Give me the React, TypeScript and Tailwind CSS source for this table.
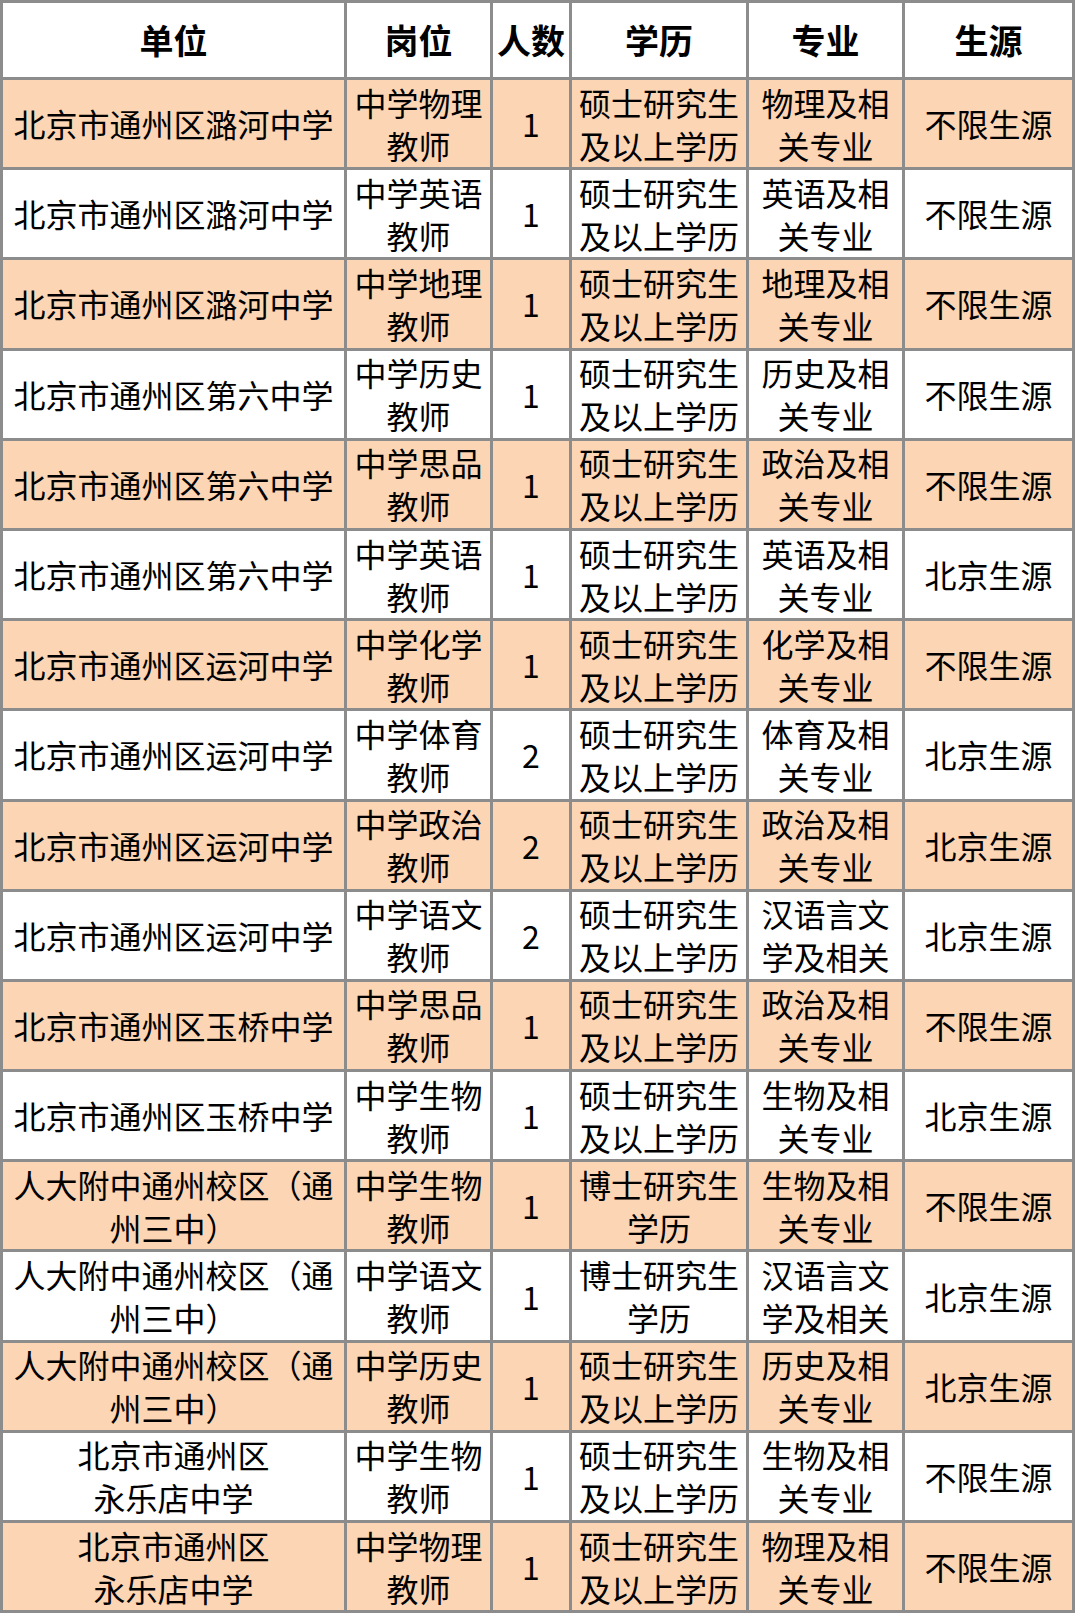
const HEADERS = ["单位", "岗位", "人数", "学历", "专业", "生源"];

type Row = string[][];

const LUHE = [["北京市通州区潞河中学"]];
const LIU = [["北京市通州区第六中学"]];
const YUNHE = [["北京市通州区运河中学"]];
const YUQIAO = [["北京市通州区玉桥中学"]];
const RENDA = [["人大附中通州校区（通", "州三中）"]];
const YONGLE = [["北京市通州区", "永乐店中学"]];
const SHUOSHI = ["硕士研究生", "及以上学历"];
const BOSHI = ["博士研究生", "学历"];

const ROWS: Row[] = [
  [...LUHE, ["中学物理", "教师"], ["1"], SHUOSHI, ["物理及相", "关专业"], ["不限生源"]],
  [...LUHE, ["中学英语", "教师"], ["1"], SHUOSHI, ["英语及相", "关专业"], ["不限生源"]],
  [...LUHE, ["中学地理", "教师"], ["1"], SHUOSHI, ["地理及相", "关专业"], ["不限生源"]],
  [...LIU, ["中学历史", "教师"], ["1"], SHUOSHI, ["历史及相", "关专业"], ["不限生源"]],
  [...LIU, ["中学思品", "教师"], ["1"], SHUOSHI, ["政治及相", "关专业"], ["不限生源"]],
  [...LIU, ["中学英语", "教师"], ["1"], SHUOSHI, ["英语及相", "关专业"], ["北京生源"]],
  [...YUNHE, ["中学化学", "教师"], ["1"], SHUOSHI, ["化学及相", "关专业"], ["不限生源"]],
  [...YUNHE, ["中学体育", "教师"], ["2"], SHUOSHI, ["体育及相", "关专业"], ["北京生源"]],
  [...YUNHE, ["中学政治", "教师"], ["2"], SHUOSHI, ["政治及相", "关专业"], ["北京生源"]],
  [...YUNHE, ["中学语文", "教师"], ["2"], SHUOSHI, ["汉语言文", "学及相关"], ["北京生源"]],
  [...YUQIAO, ["中学思品", "教师"], ["1"], SHUOSHI, ["政治及相", "关专业"], ["不限生源"]],
  [...YUQIAO, ["中学生物", "教师"], ["1"], SHUOSHI, ["生物及相", "关专业"], ["北京生源"]],
  [...RENDA, ["中学生物", "教师"], ["1"], BOSHI, ["生物及相", "关专业"], ["不限生源"]],
  [...RENDA, ["中学语文", "教师"], ["1"], BOSHI, ["汉语言文", "学及相关"], ["北京生源"]],
  [...RENDA, ["中学历史", "教师"], ["1"], SHUOSHI, ["历史及相", "关专业"], ["北京生源"]],
  [...YONGLE, ["中学生物", "教师"], ["1"], SHUOSHI, ["生物及相", "关专业"], ["不限生源"]],
  [...YONGLE, ["中学物理", "教师"], ["1"], SHUOSHI, ["物理及相", "关专业"], ["不限生源"]],
];

export default function App() {
  return (
    <div className="min-h-[1614px] bg-white">
      <div
        className="grid w-[1075px] grid-cols-[341px_143px_76px_174px_153px_167px] grid-rows-[74px_repeat(17,87.2px)] gap-[3px] bg-[#8c8c8c] p-[3px] text-black"
        style={{ fontFamily: '"Noto Sans CJK SC", "Noto Sans", sans-serif' }}
      >
        {HEADERS.map((h) => (
          <div
            key={h}
            className="flex items-center justify-center bg-white text-[34px] font-bold leading-none"
          >
            {h}
          </div>
        ))}
        {ROWS.map((row, r) =>
          row.map((lines, c) => (
            <div
              key={`${r}-${c}`}
              className={`flex flex-col items-center justify-center text-center text-[32px] leading-[43px] ${
                r % 2 === 0 ? "bg-[#fcd5b4]" : "bg-white"
              }`}
            >
              {lines.map((l, i) => (
                <span key={i} className="whitespace-nowrap">
                  {l}
                </span>
              ))}
            </div>
          ))
        )}
      </div>
    </div>
  );
}
